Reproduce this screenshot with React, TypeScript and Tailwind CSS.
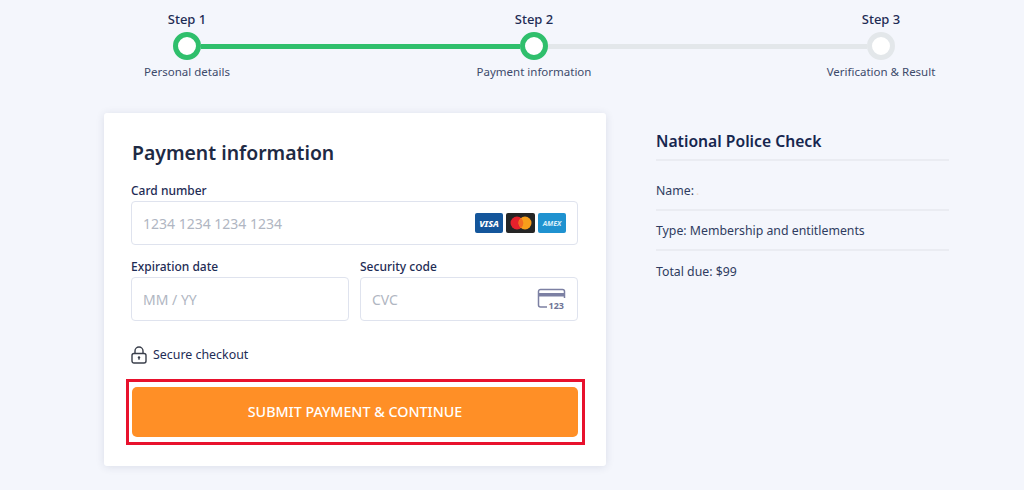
const font = "font-['Noto_Sans',sans-serif]";

const steps = [
  { title: "Step 1", label: "Personal details" },
  { title: "Step 2", label: "Payment information" },
  { title: "Step 3", label: "Verification & Result" },
];

function Circle({ done }: { done?: boolean }) {
  return (
    <div
      className={
        done
          ? "h-7 w-7 shrink-0 rounded-full border-[5px] border-[#2fbf6c] bg-white"
          : "h-7 w-7 shrink-0 rounded-full border-[5px] border-[#e3e7ea] bg-white"
      }
    />
  );
}

function Stepper() {
  return (
    <div className="pt-[11px] pr-[73px] pl-[117px]">
      <div className="flex justify-between">
        {steps.map((s) => (
          <div key={s.title} className="w-[140px] text-center text-[13px] leading-[17px] font-medium text-[#1e2c55]">
            {s.title}
          </div>
        ))}
      </div>
      <div className="mt-[4px] flex items-center px-[56px]">
        <Circle done />
        <div className="h-[5px] flex-1 bg-[#2fbf6c]" />
        <Circle done />
        <div className="h-[5px] flex-1 bg-[#e3e7ea]" />
        <Circle />
      </div>
      <div className="mt-[3px] flex justify-between">
        {steps.map((s) => (
          <div key={s.label} className="w-[140px] text-center text-[11.5px] leading-[17px] text-[#3d4a6b]">
            {s.label}
          </div>
        ))}
      </div>
    </div>
  );
}

function CardBrands() {
  return (
    <div className="flex gap-[3px]">
      <div className="flex h-[20px] w-[28px] items-center justify-center rounded-[2px] bg-[#14569b] text-[9px] leading-none font-extrabold text-white italic">
        VISA
      </div>
      <div className="flex h-[20px] w-[29px] items-center justify-center rounded-[2px] bg-[#252525]">
        <svg width="22" height="14" viewBox="0 0 22 14">
          <circle cx="7" cy="7" r="6.5" fill="#e6212c" />
          <circle cx="15" cy="7" r="6.5" fill="#f79e1b" />
          <path d="M11 2a6.5 6.5 0 0 1 0 10a6.5 6.5 0 0 1 0-10z" fill="#f26a21" />
        </svg>
      </div>
      <div className="flex h-[20px] w-[28px] items-center justify-center rounded-[2px] bg-[#1f92d0] text-[7px] leading-none font-bold text-[#d8eefa] italic">
        AMEX
      </div>
    </div>
  );
}

function CvcIcon() {
  return (
    <svg width="29" height="22" viewBox="0 0 29 22" fill="none">
      <path d="M10 19H3.5A2 2 0 0 1 1.5 17V3.5A2 2 0 0 1 3.5 1.5H25.5A2 2 0 0 1 27.5 3.5V10" stroke="#7c80a3" strokeWidth="1.5" />
      <rect x="1.5" y="5" width="26" height="3.5" fill="#7c80a3" />
      <text x="11.5" y="20.5" fontSize="9" fontWeight="700" fill="#6f7496" fontFamily="'Noto Sans',sans-serif">
        123
      </text>
    </svg>
  );
}

function LockIcon() {
  return (
    <svg width="16" height="18" viewBox="0 0 16 18" fill="none" className="shrink-0">
      <path d="M4 8V5a4 4 0 0 1 8 0v3" stroke="#3a3f4b" strokeWidth="1.4" />
      <rect x="1" y="7.5" width="14" height="9.5" rx="2" stroke="#3a3f4b" strokeWidth="1.4" />
      <circle cx="8" cy="11.5" r="1.2" fill="#3a3f4b" />
      <rect x="7.5" y="11.5" width="1" height="2.5" fill="#3a3f4b" />
    </svg>
  );
}

function Field({ label, placeholder, children }: { label: string; placeholder: string; children?: React.ReactNode }) {
  return (
    <div className="min-w-0 flex-1">
      <div className="mb-px text-[12px] leading-[18px] font-medium text-[#1e2c55]">{label}</div>
      <div className="flex h-[44px] items-center justify-between rounded-[4px] border border-[#dfe3ee] bg-white px-[11px]">
        <span className="text-[14px] text-[#b0b6c2]">{placeholder}</span>
        {children}
      </div>
    </div>
  );
}

function PaymentCard() {
  return (
    <div className="h-[353px] w-[502px] shrink-0 rounded-[3px] bg-white px-[28px] pt-[26px] shadow-[0_1px_8px_rgba(40,50,90,0.12)]">
      <h2 className="text-[19.4px] leading-[28px] font-semibold text-[#1e2a44]">Payment information</h2>
      <div className="mt-[15px] -ml-px">
        <Field label="Card number" placeholder="1234 1234 1234 1234">
          <CardBrands />
        </Field>
      </div>
      <div className="mt-[13px] -ml-px flex gap-[11px]">
        <Field label="Expiration date" placeholder="MM / YY" />
        <Field label="Security code" placeholder="CVC">
          <CvcIcon />
        </Field>
      </div>
      <div className="mt-[24px] -ml-px flex h-[20px] items-center gap-[6px] text-[12.4px] leading-[20px] text-[#1e2c55]">
        <LockIcon />
        Secure checkout
      </div>
      <div className="relative mt-[22px]">
        <div className="flex h-[50px] items-center justify-center rounded-[5px] bg-[#ff8f26] text-[14.3px] font-medium text-white">
          SUBMIT PAYMENT &amp; CONTINUE
        </div>
        <div className="absolute -top-[8px] -right-[7px] -bottom-[8px] -left-[6px] border-[3px] border-[#e8112d]" />
      </div>
    </div>
  );
}

function Summary() {
  return (
    <div className="ml-[50px] w-[293px] pt-[17px] text-[12.3px] text-[#2f3c60]">
      <div className="border-b-2 border-[#eaecf2] pb-[7px] text-[15.7px] leading-[22px] font-semibold text-[#16264f]">
        National Police Check
      </div>
      <div className="flex h-[50px] items-center border-b-2 border-[#eaecf2] pt-[12px]">
        Name:<span className="ml-[2px] text-[#f0dccb]">.</span>
      </div>
      <div className="flex h-[40px] items-center border-b-2 border-[#eaecf2] pt-[2px]">Type: Membership and entitlements</div>
      <div className="flex h-[40px] items-center pt-[2px]">Total due: $99</div>
    </div>
  );
}

export default function App() {
  return (
    <div className={`h-[490px] w-[1024px] overflow-hidden bg-[#f4f6fc] ${font}`}>
      <Stepper />
      <div className="mt-[33px] flex pl-[104px]">
        <PaymentCard />
        <Summary />
      </div>
    </div>
  );
}
